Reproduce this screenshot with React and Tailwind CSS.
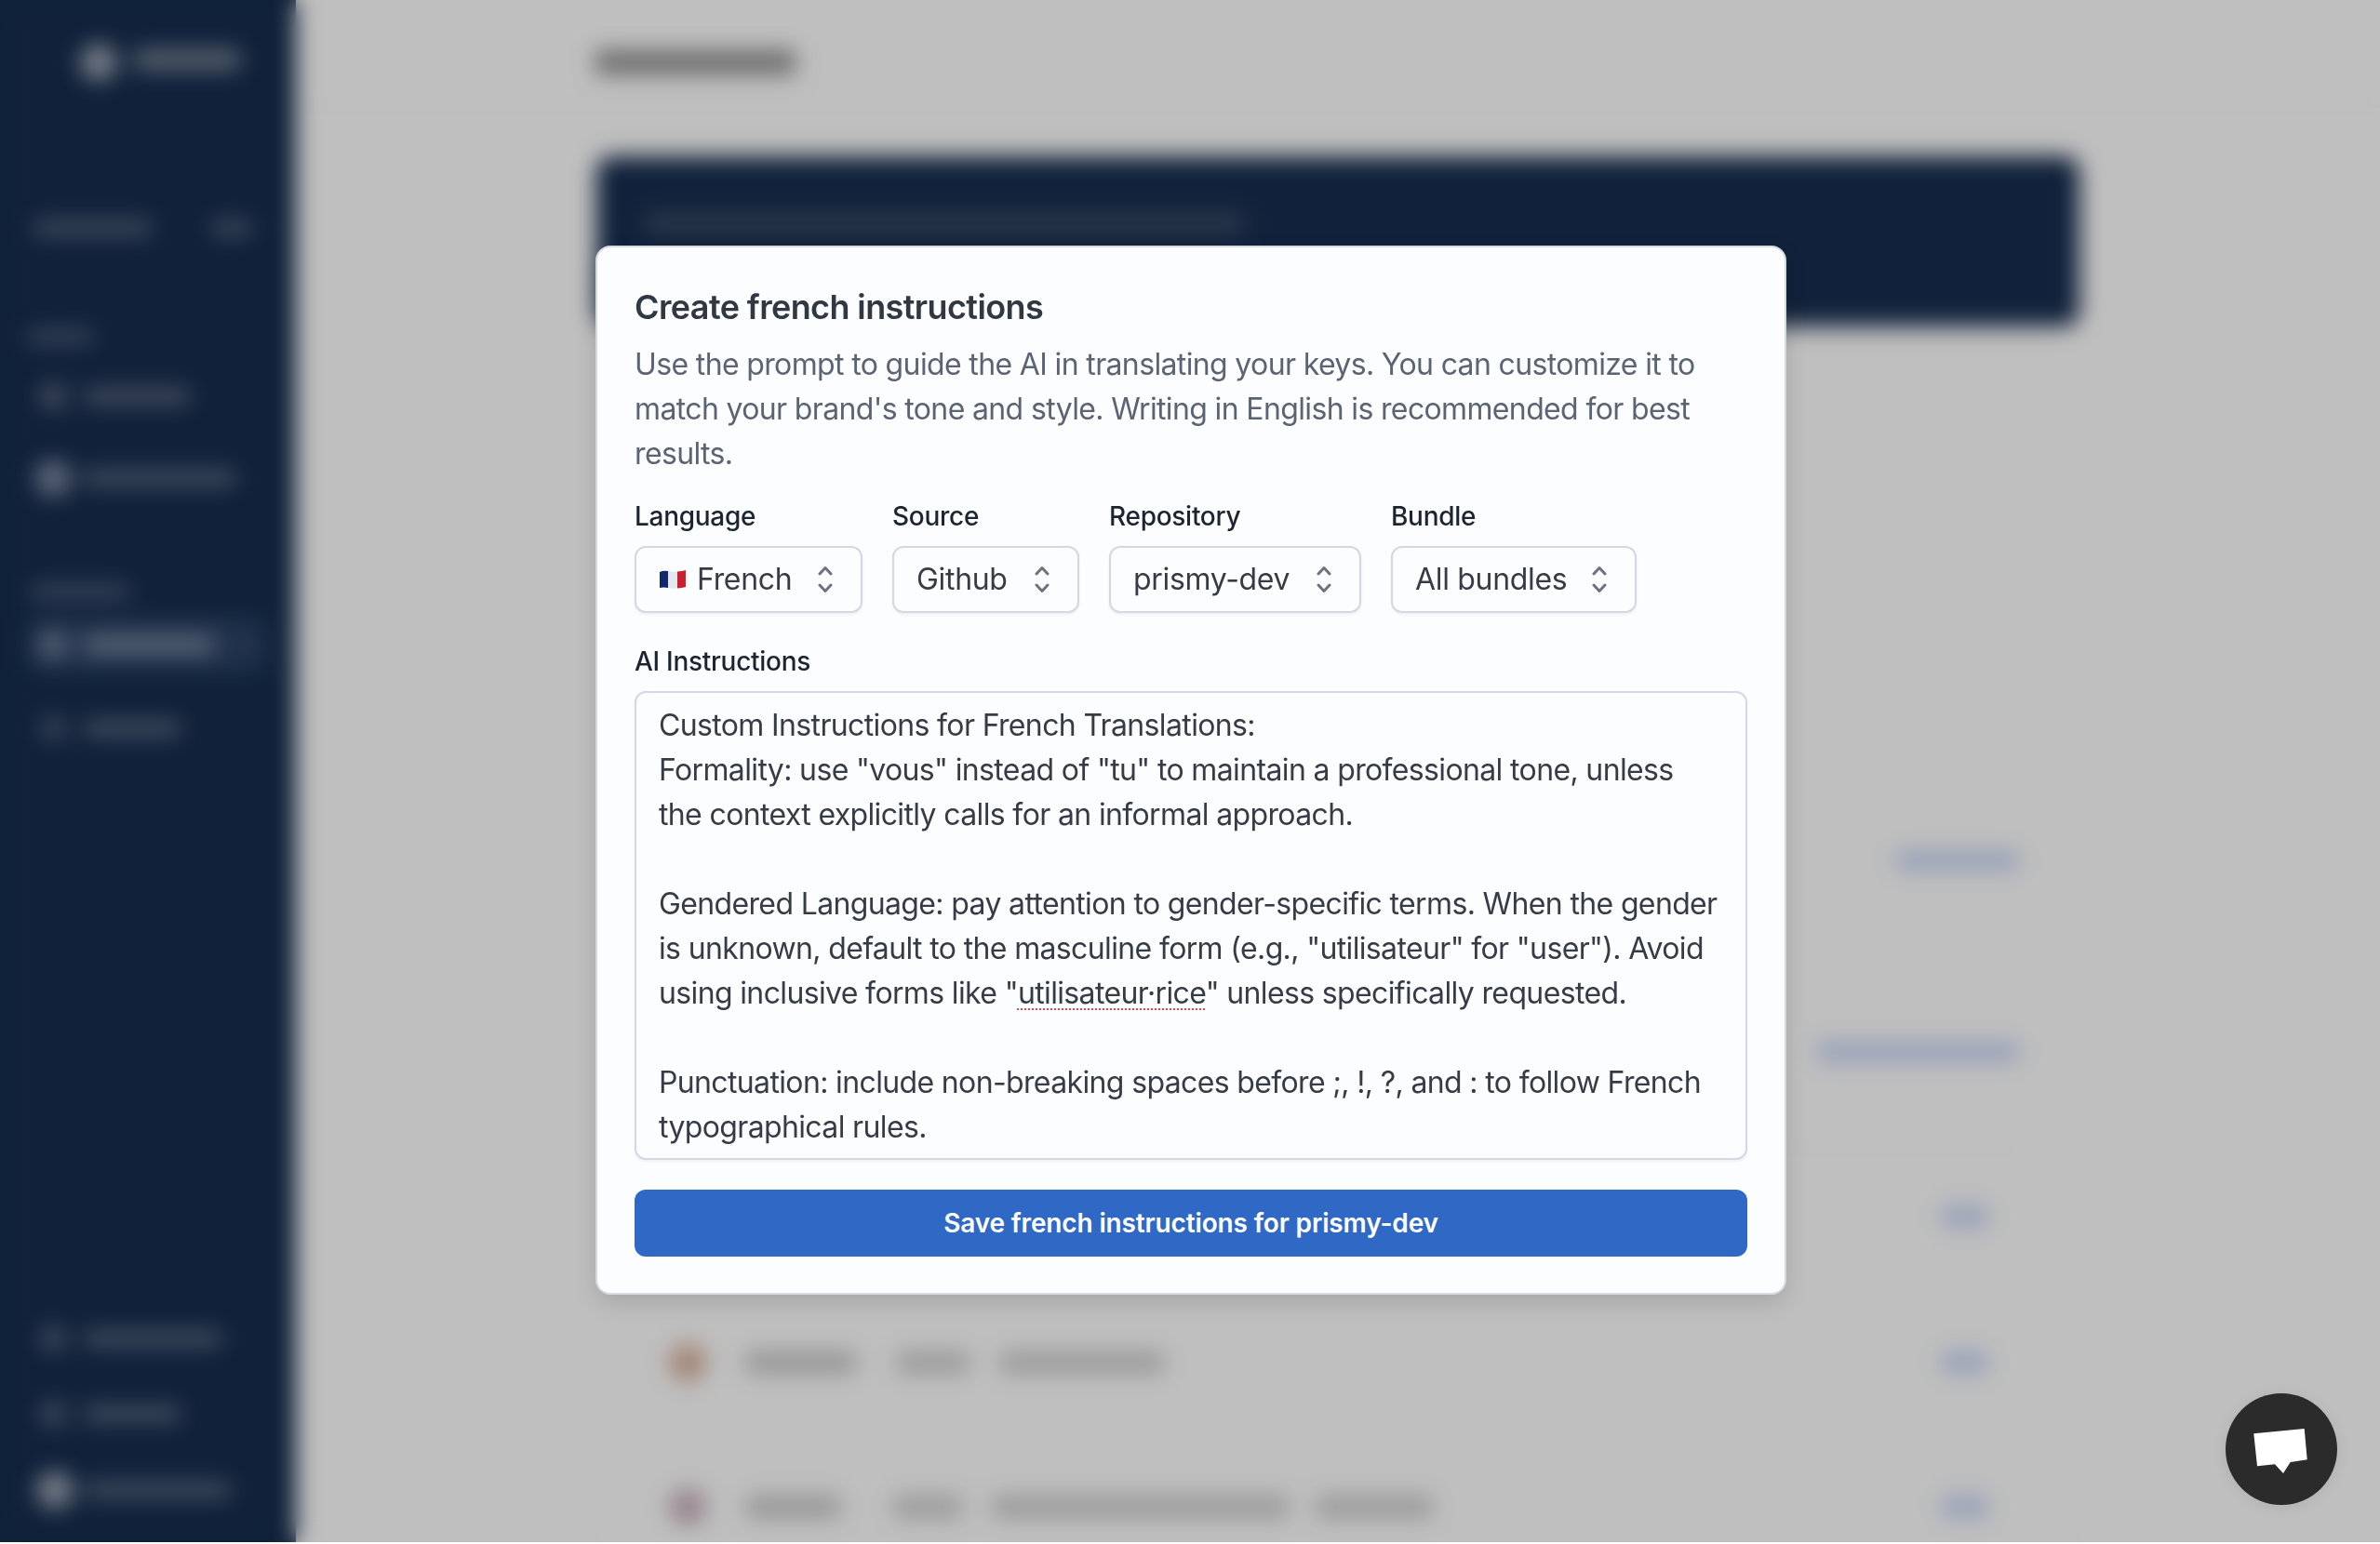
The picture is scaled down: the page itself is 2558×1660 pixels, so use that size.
import React from "react";

function Chevrons() {
  return (
    <svg width="16" height="30" viewBox="0 0 16 30" fill="none" className="shrink-0">
      <path d="M2 9 L8 2.5 L14 9" stroke="#6b7280" strokeWidth="3" strokeLinecap="round" strokeLinejoin="round" />
      <path d="M2 21 L8 27.5 L14 21" stroke="#6b7280" strokeWidth="3" strokeLinecap="round" strokeLinejoin="round" />
    </svg>
  );
}

function Flag() {
  return (
    <svg width="30" height="22" viewBox="0 0 30 22" className="shrink-0">
      <path d="M1 3 Q5 1 10 2 L10 20 Q5 19 1 20 Z" fill="#0f2a6e" />
      <path d="M10 2 Q15 3 20 2.5 L20 20.5 Q15 21 10 20 Z" fill="#e6e6ee" />
      <path d="M20 2.5 Q25 2 29 1 L29 19 Q25 20 20 20.5 Z" fill="#c8202c" />
    </svg>
  );
}

function Select({ label, width, children }) {
  return (
    <div className="flex flex-col gap-[12px]">
      <span className="text-[28px] leading-[40px] font-medium tracking-[-0.01em] text-[#1b2430]">{label}</span>
      <div
        className="h-[72px] flex items-center justify-between pl-[24px] pr-[30px] rounded-[12px] border-2 border-[#d1d9e4] bg-[#fcfdff] shadow-[0_2px_3px_rgba(0,0,0,0.06)] text-[32px] leading-[48px] tracking-[-0.01em] text-[#363c46]"
        style={{ width }}
      >
        {children}
        <Chevrons />
      </div>
    </div>
  );
}

export default function App() {
  return (
    <div className="relative w-[2558px] h-[1658px] overflow-hidden flex bg-white font-['Inter','Liberation_Sans',sans-serif]">
      {/* Sidebar behind the frosted overlay */}
      <aside className="w-[318px] h-full shrink-0 bg-[#162c4d] flex flex-col">
        <div className="h-[40px] mt-[47px] ml-[86px] flex items-center">
          <div className="w-[40px] h-[40px] rounded-full bg-[#a0a9b8]" />
          <div className="w-[114px] h-[22px] ml-[18px] -mt-[6px] bg-[#7b8698]" />
        </div>
        <div className="h-[40px] mt-[138px] ml-[36px] flex items-center">
          <div className="w-[127px] h-[18px] bg-[#55637c]" />
          <div className="w-[42px] h-[18px] ml-[65px] bg-[#55637c]" />
        </div>
        <div className="h-[40px] mt-[77px] ml-[30px] flex items-center">
          <div className="w-[70px] h-[16px] bg-[#4f5f7b]" />
        </div>
        <div className="h-[40px] mt-[24px] ml-[44px] flex items-center">
          <div className="w-[26px] h-[26px] bg-[#5c697f]" />
          <div className="w-[114px] h-[18px] ml-[20px] bg-[#5c697f]" />
        </div>
        <div className="h-[40px] mt-[48px] ml-[37px] flex items-center">
          <div className="w-[40px] h-[40px] rounded-full bg-[#7d89a0]" />
          <div className="w-[163px] h-[18px] ml-[13px] bg-[#5c697f]" />
        </div>
        <div className="h-[40px] mt-[82px] ml-[33px] flex items-center">
          <div className="w-[106px] h-[16px] bg-[#4f5f7b]" />
        </div>
        <div className="h-[58px] w-[255px] mt-[8px] ml-[30px] pl-[14px] flex items-center rounded-[10px] bg-[#2c4265]">
          <div className="w-[26px] h-[26px] bg-[#7a8aa0]" />
          <div className="w-[140px] h-[20px] ml-[20px] bg-[#7a8aa0]" />
        </div>
        <div className="h-[40px] mt-[41px] ml-[44px] flex items-center">
          <div className="w-[26px] h-[26px] bg-[#4a5a76]" />
          <div className="w-[104px] h-[18px] ml-[20px] bg-[#5c697f]" />
        </div>
        <div className="flex-1" />
        <div className="h-[40px] ml-[44px] flex items-center">
          <div className="w-[26px] h-[26px] bg-[#55637c]" />
          <div className="w-[148px] h-[18px] ml-[20px] bg-[#5c697f]" />
        </div>
        <div className="h-[40px] mt-[41px] ml-[44px] flex items-center">
          <div className="w-[26px] h-[26px] bg-[#55637c]" />
          <div className="w-[104px] h-[18px] ml-[20px] bg-[#5c697f]" />
        </div>
        <div className="h-[40px] mt-[42px] mb-[36px] ml-[39px] flex items-center">
          <div className="w-[40px] h-[40px] rounded-full bg-[#a0a9b8]" />
          <div className="w-[155px] h-[18px] ml-[13px] bg-[#5c697f]" />
        </div>
      </aside>

      {/* Main page behind the frosted overlay */}
      <main className="flex-1 h-full flex flex-col bg-white">
        <header className="h-[115px] shrink-0 pl-[322px] pt-[20px] flex items-center border-b-2 border-[#f3f4f6]">
          <div className="w-[215px] h-[26px] bg-[#8f8f8f]" />
        </header>
        <div className="pl-[323px] w-[1917px] flex flex-col">
          <div className="mt-[53px] h-[183px] rounded-[16px] bg-[#172d4f] pl-[52px] pt-[60px] shrink-0">
            <div className="w-[645px] h-[24px] bg-[#3b4a63]" />
          </div>
          <div className="mt-[34px] h-[395px] rounded-[16px] border-2 border-[#fafafa]" />
          <div className="mt-[30px] h-[210px] rounded-[16px] border-2 border-[#fafafa] flex items-center justify-end pr-[64px]">
            <div className="w-[131px] h-[22px] mb-[-20px] bg-[#c8d6f5]" />
          </div>
          <div className="mt-[30px] rounded-[16px] border-2 border-[#fafafa] flex flex-col px-[64px]">
            <div className="h-[183px] flex justify-end pt-[68px] border-b-2 border-[#f3f4f6]">
              <div className="w-[216px] h-[22px] bg-[#c8d6f5]" />
            </div>
            <div className="h-[146px] flex items-center justify-end pr-[33px]">
              <div className="w-[49px] h-[24px] bg-[#c8d6f5]" />
            </div>
            <div className="h-[168px] flex items-center">
              <div className="w-[40px] h-[40px] ml-[12px] rounded-full bg-[#d8b09a]" />
              <div className="w-[118px] h-[24px] ml-[43px] bg-[#c7c7c7]" />
              <div className="w-[78px] h-[24px] ml-[44px] bg-[#cdcdcd]" />
              <div className="w-[176px] h-[24px] ml-[33px] bg-[#cdcdcd]" />
              <div className="flex-1" />
              <div className="w-[49px] h-[24px] mr-[33px] bg-[#c8d6f5]" />
            </div>
            <div className="h-[142px] flex items-center">
              <div className="w-[40px] h-[40px] ml-[12px] rounded-full bg-[#c8b0bc]" />
              <div className="w-[101px] h-[24px] ml-[43px] bg-[#c7c7c7]" />
              <div className="w-[74px] h-[24px] ml-[57px] bg-[#cdcdcd]" />
              <div className="w-[319px] h-[24px] ml-[32px] bg-[#cdcdcd]" />
              <div className="w-[126px] h-[24px] ml-[29px] bg-[#cdcdcd]" />
              <div className="flex-1" />
              <div className="w-[49px] h-[24px] mr-[33px] bg-[#c8d6f5]" />
            </div>
          </div>
        </div>
      </main>

      {/* Frosted overlay */}
      <div className="absolute inset-0 bg-black/25 backdrop-blur-[12px]" />

      {/* Modal */}
      <div className="absolute left-[640px] top-[264px] w-[1280px] h-[1128px] rounded-[16px] border-2 border-[#d3dae4] bg-[#fcfdff] shadow-[0_10px_24px_rgba(0,0,0,0.12)] px-[40px] pt-[40px] flex flex-col">
        <h2 className="text-[36px] leading-[48px] font-semibold tracking-[-0.017em] text-[#303842]">Create french instructions</h2>
        <p className="mt-[14px] text-[32px] leading-[48px] tracking-[-0.02em] text-[#5b6472]">
          Use the prompt to guide the AI in translating your keys. You can customize it to match your brand's tone and style. Writing in English is recommended for best results.
        </p>
        <div className="mt-[23px] flex gap-[32px]">
          <Select label="Language" width="245px">
            <span className="flex items-center gap-[11px]"><Flag />French</span>
          </Select>
          <Select label="Source" width="201px">
            <span>Github</span>
          </Select>
          <Select label="Repository" width="271px">
            <span>prismy-dev</span>
          </Select>
          <Select label="Bundle" width="264px">
            <span>All bundles</span>
          </Select>
        </div>
        <label className="mt-[32px] text-[28px] leading-[40px] font-medium tracking-[-0.01em] text-[#1b2430]">AI Instructions</label>
        <div className="mt-[12px] h-[504px] overflow-hidden rounded-[12px] border-2 border-[#d1d9e4] shadow-[0_2px_3px_rgba(0,0,0,0.06)] px-[24px] pt-[11px] text-[32px] leading-[48px] tracking-[-0.02em] text-[#363c46] whitespace-pre-wrap">
{`Custom Instructions for French Translations:
Formality: use "vous" instead of "tu" to maintain a professional tone, unless the context explicitly calls for an informal approach.

Gendered Language: pay attention to gender-specific terms. When the gender is unknown, default to the masculine form (e.g., "utilisateur" for "user"). Avoid using inclusive forms like "`}<span className="underline decoration-dotted decoration-[#e5484d] decoration-2 underline-offset-[5px]">utilisateur·rice</span>{`" unless specifically requested.

Punctuation: include non-breaking spaces before ;, !, ?, and : to follow French typographical rules.`}
        </div>
        <button className="mt-[32px] h-[72px] w-full rounded-[12px] bg-[#3069c5] text-white text-[28px] leading-[40px] font-semibold tracking-[-0.005em]">
          Save french instructions for prismy-dev
        </button>
      </div>

      {/* Chat widget */}
      <div className="absolute left-[2392px] top-[1498px] w-[120px] h-[120px] rounded-full bg-[#2b2b2b] shadow-[0_2px_16px_rgba(0,0,0,0.08)]">
        <svg width="120" height="120" viewBox="0 0 120 120">
          <polygon points="30.3,43.3 84.7,38 87.7,71.3 69.7,74 62,86 53,76.3 34,78.3" fill="#ffffff" />
        </svg>
      </div>
    </div>
  );
}
